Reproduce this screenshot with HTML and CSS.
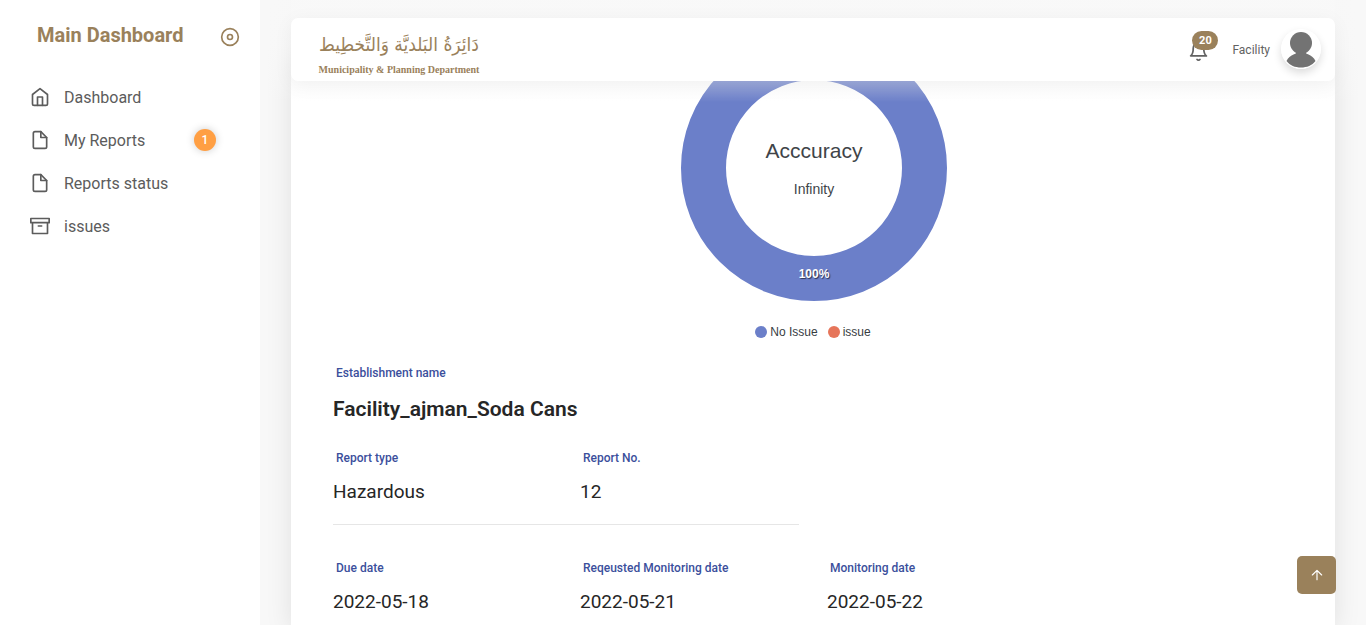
FILE: index.html
```html
<!DOCTYPE html>
<html lang="en">
<head>
<meta charset="utf-8">
<meta name="viewport" content="width=device-width, initial-scale=1">
<title>Main Dashboard</title>
<link rel="stylesheet" href="styles.css">
</head>
<body>
<div class="app">
  <aside class="sidebar">
    <div class="sidebar-head">
      <h2 class="brand">Main Dashboard</h2>
      <button class="icon-button" type="button" aria-label="Collapse menu">
        <svg class="icon" width="20" height="20" viewBox="0 0 24 24"><circle cx="12" cy="12" r="10"/><circle cx="12" cy="12" r="3"/></svg>
      </button>
    </div>
    <nav class="menu">
      <a class="menu-item" href="#dashboard">
        <svg class="icon" width="20" height="20" viewBox="0 0 24 24"><path d="M3 9l9-7 9 7v11a2 2 0 0 1-2 2H5a2 2 0 0 1-2-2z"/><path d="M9 22V12h6v10"/></svg>
        <span>Dashboard</span>
      </a>
      <a class="menu-item" href="#reports">
        <svg class="icon" width="20" height="20" viewBox="0 0 24 24"><path d="M13 2H6a2 2 0 0 0-2 2v16a2 2 0 0 0 2 2h12a2 2 0 0 0 2-2V9z"/><path d="M13 2v7h7"/></svg>
        <span>My Reports</span>
        <span class="count">1</span>
      </a>
      <a class="menu-item" href="#status">
        <svg class="icon" width="20" height="20" viewBox="0 0 24 24"><path d="M13 2H6a2 2 0 0 0-2 2v16a2 2 0 0 0 2 2h12a2 2 0 0 0 2-2V9z"/><path d="M13 2v7h7"/></svg>
        <span>Reports status</span>
      </a>
      <a class="menu-item" href="#issues">
        <svg class="icon" width="20" height="20" viewBox="0 0 24 24"><path d="M21 8v13H3V8M1 3h22v5H1zM10 12h4"/></svg>
        <span>issues</span>
      </a>
    </nav>
  </aside>

  <div class="page">
    <div class="fade"></div>
    <header class="topbar">
      <div class="logo">
        <span class="logo-arabic" lang="ar" dir="rtl">دَائِرَةُ البَلديَّة وَالتَّخطِيط</span>
        <span class="logo-name">Municipality &amp; Planning Department</span>
      </div>
      <div class="user">
        <button class="bell" type="button" aria-label="Notifications">
          <svg class="icon" width="21" height="21" viewBox="0 0 24 24"><path d="M18 8A6 6 0 0 0 6 8c0 7-3 9-3 9h18s-3-2-3-9M13.7 21a2 2 0 0 1-3.4 0"/></svg>
          <span class="bell-count">20</span>
        </button>
        <span class="user-name">Facility</span>
        <svg class="avatar" width="40" height="40" viewBox="0 0 40 40"><circle cx="20" cy="20" r="20" fill="#fff"/><circle cx="20" cy="14" r="11" fill="#737373"/><path fill="#737373" d="M16 22h8c0 2 1 2.500 3 3.300 3.500 1.500 6 3.700 7.500 6.700C31 36.500 26 38.500 20 38.500S9 36.500 5.500 32c1.500-3 4-5.200 7.500-6.700 2-.8 3-1.300 3-3.300z"/></svg>
      </div>
    </header>

    <main class="card">
      <figure class="chart">
        <svg class="donut" width="266" height="266" viewBox="0 0 266 266" role="img" aria-label="Accuracy chart">
          <circle cx="133" cy="133" r="110.500" fill="none" stroke="#6b7fc9" stroke-width="45"/>
          <text class="donut-title" x="133" y="123">Acccuracy</text>
          <text class="donut-value" x="133" y="159">Infinity</text>
          <text class="donut-percent" x="133" y="243">100%</text>
        </svg>
        <figcaption class="legend">
          <span class="legend-item"><i class="dot dot-ok"></i>No Issue</span>
          <span class="legend-item"><i class="dot dot-issue"></i>issue</span>
        </figcaption>
      </figure>

      <dl class="details">
        <div class="field wide">
          <dt>Establishment name</dt>
          <dd class="establishment">Facility_ajman_Soda Cans</dd>
        </div>
        <div class="field">
          <dt>Report type</dt>
          <dd>Hazardous</dd>
        </div>
        <div class="field">
          <dt>Report No.</dt>
          <dd>12</dd>
        </div>
      </dl>
      <div class="rule-row"><hr class="rule"></div>
      <dl class="details">
        <div class="field">
          <dt>Due date</dt>
          <dd>2022-05-18</dd>
        </div>
        <div class="field">
          <dt>Reqeusted Monitoring date</dt>
          <dd>2022-05-21</dd>
        </div>
        <div class="field">
          <dt>Monitoring date</dt>
          <dd>2022-05-22</dd>
        </div>
      </dl>
    </main>
    <button class="to-top" type="button" aria-label="Scroll to top">
      <svg class="icon" width="14" height="14" viewBox="0 0 24 24"><path d="M12 20V4M4 12l8-8 8 8"/></svg>
    </button>
  </div>
</div>
</body>
</html>
```
FILE: styles.css
```css
* { box-sizing: border-box; }

body {
  margin: 0;
  background: #f8f8f8;
  color: #626262;
  font-family: Roboto, "Liberation Sans", sans-serif;
  font-size: 14px;
}

button {
  padding: 0;
  border: 0;
  background: none;
  color: inherit;
  font: inherit;
  cursor: pointer;
}

.icon {
  display: block;
  flex: none;
  fill: none;
  stroke: currentColor;
  stroke-width: 2;
  stroke-linecap: round;
  stroke-linejoin: round;
}

.app {
  display: flex;
  min-height: 100vh;
}

.sidebar {
  flex: none;
  width: 260px;
  background: #fff;
}

.sidebar-head {
  display: flex;
  align-items: center;
  justify-content: space-between;
  padding: 22px 20px 0 37px;
}

.brand {
  margin: 0;
  color: #9a815b;
  font-size: 20px;
  font-weight: 700;
  line-height: 26px;
}

.icon-button {
  padding-top: 4px;
  color: #9a815b;
}

.menu {
  display: grid;
  gap: 3px;
  padding: 29px 44px 0 30px;
}

.menu-item {
  display: flex;
  align-items: center;
  gap: 14px;
  height: 40px;
  color: #5c5c5c;
  font-size: 16px;
  text-decoration: none;
}

.count {
  width: 22px;
  height: 22px;
  margin-left: auto;
  border-radius: 50%;
  background: #ff9f43;
  box-shadow: 0 0 8px rgba(0, 0, 0, 0.2);
  color: #fff;
  font-size: 12px;
  font-weight: 500;
  line-height: 22px;
  text-align: center;
}

.page {
  position: relative;
  display: flex;
  flex: 1;
  min-width: 0;
  padding: 0 31px;
}

.fade {
  position: absolute;
  inset: 0 0 auto;
  z-index: 1;
  height: 102px;
  background: linear-gradient(180deg, rgba(248, 248, 248, 0.95) 44%, rgba(248, 248, 248, 0.46) 73%, rgba(255, 255, 255, 0));
}

.topbar {
  position: absolute;
  inset: 18px 31px auto;
  z-index: 2;
  display: flex;
  align-items: center;
  justify-content: space-between;
  height: 63px;
  padding: 0 14px 0 28px;
  border-radius: 7px;
  background: #fff;
  box-shadow: 0 4px 20px rgba(0, 0, 0, 0.05);
}

.logo {
  display: flex;
  flex-direction: column;
  align-items: center;
  width: 160px;
  color: #9a815b;
  white-space: nowrap;
}

.logo-arabic {
  font-family: "DejaVu Sans Condensed", "DejaVu Sans", sans-serif;
  font-size: 19px;
  line-height: 40px;
}

.logo-name {
  font-family: "Liberation Serif", serif;
  font-size: 10px;
  font-weight: 700;
  line-height: 12px;
}

.user {
  display: flex;
  align-items: center;
}

.bell {
  position: relative;
  margin-right: 23px;
  padding-top: 4px;
}

.bell-count {
  position: absolute;
  top: -6px;
  left: 4px;
  width: 26px;
  border-radius: 10px;
  background: #9a815b;
  color: #fff;
  font-size: 11px;
  font-weight: 700;
  line-height: 19px;
}

.user-name {
  margin-right: 11px;
  font-size: 12px;
}

.avatar {
  margin-bottom: 2px;
  border-radius: 50%;
  box-shadow: 0 4px 8px rgba(0, 0, 0, 0.14);
}

.card {
  flex: 1;
  min-width: 0;
  padding: 35px 14px 12px 42px;
  background: #fff;
  box-shadow: 0 4px 25px rgba(0, 0, 0, 0.1);
}

.chart {
  display: flex;
  flex-direction: column;
  align-items: center;
  margin: 0 26px 0 0;
}

.donut {
  display: block;
  font-family: "Liberation Sans", Arial, sans-serif;
  text-anchor: middle;
}

.donut-title {
  fill: #404448;
  font-size: 21px;
}

.donut-value {
  fill: #404448;
  font-size: 14px;
}

.donut-percent {
  fill: #fff;
  font-size: 12px;
  font-weight: 700;
  text-shadow: 1px 1px 1px rgba(0, 0, 0, 0.6);
}

.legend {
  display: flex;
  gap: 10px;
  margin-top: 23px;
  padding-right: 2px;
  color: #373d3f;
  font-family: "Liberation Sans", Arial, sans-serif;
  font-size: 12px;
  line-height: 16px;
}

.legend-item {
  display: flex;
  align-items: center;
  gap: 3px;
}

.dot {
  width: 12px;
  height: 12px;
  border-radius: 50%;
}

.dot-ok { background: #6b7fc9; }
.dot-issue { background: #e6755a; }

.details {
  display: grid;
  grid-template-columns: repeat(4, 1fr);
  row-gap: 26px;
  margin: 24px 0 0;
}

.wide { grid-column: 1 / -1; }

.field dt {
  padding-left: 3px;
  color: #3b4f9c;
  font-size: 12px;
  font-weight: 500;
  line-height: 18px;
}

.field dd {
  margin: 13px 0 0;
  color: #262626;
  font-size: 19px;
  line-height: 24px;
}

.field .establishment {
  font-size: 21px;
  font-weight: 600;
  line-height: 28px;
}

.rule-row {
  display: grid;
  grid-template-columns: repeat(2, 1fr);
  padding: 20px 0 10px;
}

.rule {
  width: auto;
  height: 1px;
  margin: 0 28px 0 0;
  border: 0;
  background: #e6e6e6;
}

.to-top {
  position: fixed;
  right: 30px;
  bottom: 31px;
  display: grid;
  place-items: center;
  width: 39px;
  height: 38px;
  border-radius: 5px;
  background: #9a815b;
  color: #fff;
}
```
